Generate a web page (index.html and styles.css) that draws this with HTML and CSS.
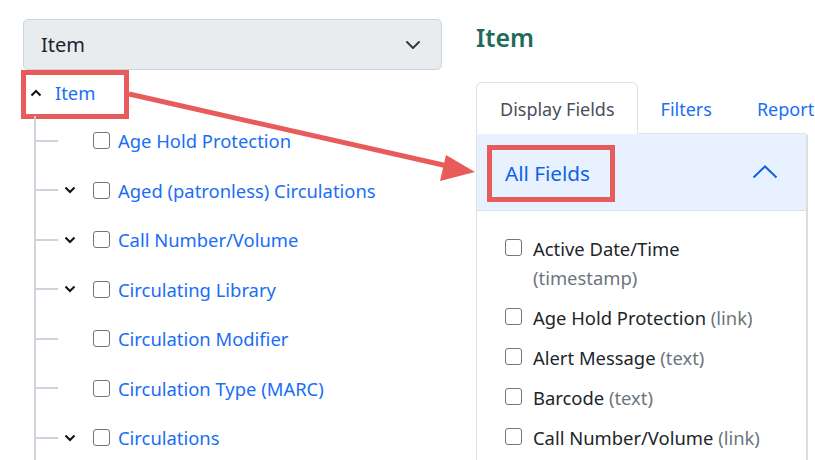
FILE: index.html
```html
<!DOCTYPE html>
<html lang="en">
<head>
<meta charset="utf-8">
<title>Item report</title>
<link rel="stylesheet" href="styles.css">
</head>
<body>
<div class="page">
  <div class="left">
    <div class="select">
      <span>Item</span>
      <svg class="sel-chev" width="16" height="16" viewBox="0 0 16 16"><path d="M2 5l6 6 6-6" fill="none" stroke="#343a40" stroke-width="2" stroke-linecap="round" stroke-linejoin="round"/></svg>
    </div>
    <div class="root hl">
      <svg class="chev" width="12" height="12" viewBox="0 0 12 12"><path d="M1.5 8.5l4.5-4.5 4.5 4.5" fill="none" stroke="#111" stroke-width="2"/></svg>
      <span class="link">Item</span>
    </div>
    <ul class="tree">
      <li><span class="chev-slot"></span><span class="cb"></span><span class="link">Age Hold Protection</span></li>
      <li><span class="chev-slot"><svg width="12" height="12" viewBox="0 0 12 12"><path d="M1.5 3.5l4.5 4.5 4.5-4.5" fill="none" stroke="#111" stroke-width="2"/></svg></span><span class="cb"></span><span class="link">Aged (patronless) Circulations</span></li>
      <li><span class="chev-slot"><svg width="12" height="12" viewBox="0 0 12 12"><path d="M1.5 3.5l4.5 4.5 4.5-4.5" fill="none" stroke="#111" stroke-width="2"/></svg></span><span class="cb"></span><span class="link">Call Number/Volume</span></li>
      <li><span class="chev-slot"><svg width="12" height="12" viewBox="0 0 12 12"><path d="M1.5 3.5l4.5 4.5 4.5-4.5" fill="none" stroke="#111" stroke-width="2"/></svg></span><span class="cb"></span><span class="link">Circulating Library</span></li>
      <li><span class="chev-slot"></span><span class="cb"></span><span class="link">Circulation Modifier</span></li>
      <li><span class="chev-slot"></span><span class="cb"></span><span class="link">Circulation Type (MARC)</span></li>
      <li><span class="chev-slot"><svg width="12" height="12" viewBox="0 0 12 12"><path d="M1.5 3.5l4.5 4.5 4.5-4.5" fill="none" stroke="#111" stroke-width="2"/></svg></span><span class="cb"></span><span class="link">Circulations</span></li>
    </ul>
  </div>
  <div class="right">
    <h2 class="title">Item</h2>
    <div class="tabs">
      <span class="tab active">Display Fields</span>
      <span class="tab">Filters</span>
      <span class="tab">Report</span>
    </div>
    <div class="card">
      <div class="card-head">
        <span class="head-title hl">All Fields</span>
        <svg class="up" width="26" height="14" viewBox="0 0 26 14"><path d="M1.5 12.5l11.5-11 11.5 11" fill="none" stroke="#0c63e4" stroke-width="2"/></svg>
      </div>
      <ul class="fields">
        <li><span class="cb"></span><span class="fname">Active Date/Time <span class="ftype">(timestamp)</span></span></li>
        <li><span class="cb"></span><span class="fname">Age Hold Protection <span class="ftype">(link)</span></span></li>
        <li><span class="cb"></span><span class="fname">Alert Message <span class="ftype">(text)</span></span></li>
        <li><span class="cb"></span><span class="fname">Barcode <span class="ftype">(text)</span></span></li>
        <li><span class="cb"></span><span class="fname">Call Number/Volume <span class="ftype">(link)</span></span></li>
      </ul>
    </div>
  </div>
  <svg class="arrow" width="815" height="460" viewBox="0 0 815 460">
    <line x1="129" y1="94" x2="452" y2="167" stroke="#e85b5b" stroke-width="5"/>
    <polygon points="475,172 446,155 440,181" fill="#e85b5b"/>
  </svg>
</div>
</body>
</html>
```
FILE: styles.css
```css
* { box-sizing: border-box; }
html, body { margin: 0; padding: 0; }
body {
  font-family: "Noto Sans", "Open Sans", sans-serif;
  font-size: 18.4px;
  color: #212529;
  background: #fff;
  overflow: hidden;
}
.page {
  position: relative;
  width: 815px;
  height: 460px;
  display: flex;
  overflow: hidden;
}
.left {
  width: 442px;
  padding: 19px 0 0 23px;
  flex: none;
}
.select {
  height: 51px;
  width: 419px;
  background: #e9ecef;
  border: 1px solid #ced4da;
  border-radius: 5px;
  display: flex;
  align-items: center;
  justify-content: space-between;
  padding: 0 20px 0 17px;
  font-size: 20px;
}
.link { color: #1a6ef5; }
.hl { border: 5px solid #e85b5b; }
.root {
  margin-left: -2px;
  width: 108px;
  height: 49px;
  display: flex;
  align-items: center;
  padding-left: 4px;
  padding-bottom: 4px;
  gap: 13px;
}
.chev { display: block; }
.tree {
  list-style: none;
  margin: -3px 0 0 11px;
  padding: 0;
  border-left: 2px solid #ced4da;
  height: 360px;
}
.tree li {
  position: relative;
  height: 49.5px;
  display: flex;
  align-items: center;
  padding-left: 28px;
}
.tree li::before {
  content: "";
  position: absolute;
  left: 0;
  top: 50%;
  margin-top: -1px;
  width: 22px;
  height: 2px;
  background: #ced4da;
}
.chev-slot {
  width: 12px;
  height: 12px;
  margin-right: 17px;
  display: flex;
}
.cb {
  width: 17px;
  height: 17px;
  border: 1.5px solid #757575;
  border-radius: 3px;
  flex: none;
  margin-right: 8px;
  background: #fff;
}
.right {
  flex: 1;
  padding-left: 34px;
  min-width: 0;
}
.title {
  margin: 21px 0 0;
  font-size: 25px;
  font-weight: 600;
  line-height: 32px;
  color: #1e6b5a;
}
.tabs {
  margin-top: 29px;
  display: flex;
  height: 52px;
  white-space: nowrap;
  font-size: 18px;
}
.tab {
  display: flex;
  align-items: center;
  padding: 2px 22px 0 23px;
  color: #1a6ef5;
  border: 1px solid transparent;
  border-radius: 6px 6px 0 0;
}
.tab + .tab { padding: 2px 21px 0 22px; }
.tab.active {
  color: #495057;
  border-color: #dee2e6;
  border-bottom-color: #fff;
  background: #fff;
}
.card {
  width: 332px;
  height: 400px;
  border: 1px solid #dee2e6;
  border-right: 2px solid #ddd;
  border-radius: 4px 4px 0 0;
  margin-top: -1px;
}
.card-head {
  height: 77px;
  background: #e7f1ff;
  border-bottom: 1px solid #dee2e6;
  display: flex;
  align-items: center;
  justify-content: space-between;
  padding: 0 28px 0 10px;
}
.head-title {
  display: flex;
  align-items: center;
  height: 57px;
  padding: 0 20px 0 13px;
  font-size: 20.7px;
  color: #0c63e4;
  margin-top: 2px;
}
.up { display: block; }
.fields {
  list-style: none;
  margin: 0;
  padding: 23px 25px 0 28px;
}
.fields li {
  display: flex;
  align-items: flex-start;
  line-height: 29px;
  margin-bottom: 11px;
}
.fields .cb {
  width: 17px;
  height: 17px;
  margin-top: 5px;
  margin-right: 11px;
}
.ftype { color: #6c757d; }
.arrow {
  position: absolute;
  left: 0;
  top: 0;
  pointer-events: none;
}
```
